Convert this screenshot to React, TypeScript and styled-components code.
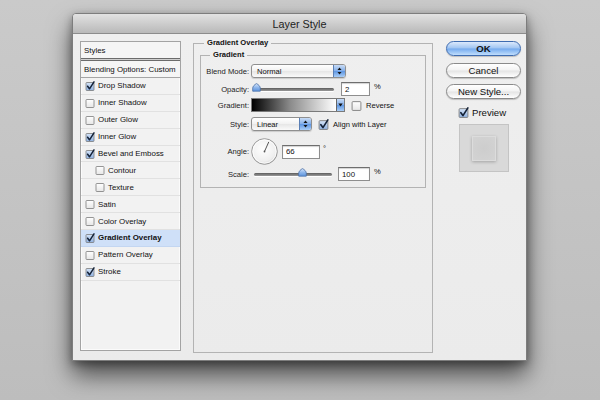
import React from "react";
import styled, { createGlobalStyle } from "styled-components";

const Global = createGlobalStyle`
  html, body { margin: 0; padding: 0; }
  body {
    width: 600px; height: 400px; overflow: hidden;
    background: linear-gradient(#cacaca, #bdbdbd);
    font-family: "Liberation Sans", Arial, sans-serif;
  }
`;

const Page = styled.div`
  width: 600px; height: 400px;
  padding: 13px 0 0 72px;
  box-sizing: border-box;
`;

const Window = styled.div`
  width: 455px; height: 348px;
  box-sizing: border-box;
  background: #ececec;
  border: 1px solid #7d7d7d;
  border-radius: 4px 4px 0 0;
  box-shadow: 0 14px 24px rgba(0,0,0,0.6), 0 3px 8px rgba(0,0,0,0.35);
  display: flex; flex-direction: column;
  overflow: hidden;
`;

const TitleBar = styled.div`
  height: 19px;
  flex: none;
  background: linear-gradient(#e2e2e2, #cdcdcd 50%, #b9b9b9);
  border-bottom: 1px solid #8c8c8c;
  display: flex; align-items: center; justify-content: center;
  font-size: 10.8px; color: #1d1d1d;
`;

const Body = styled.div`
  flex: 1;
  display: flex;
  padding: 0 5px 0 7px;
  background: linear-gradient(#efefef, #ebebeb);
`;

const LeftPanel = styled.div`
  margin-top: 7px;
  width: 101px; height: 310px;
  box-sizing: border-box;
  border: 1px solid #a3a3a3;
  box-shadow: inset 0 0 0 1px #fbfbfb;
  background: #f2f2f2;
  display: flex; flex-direction: column;
  font-size: 7.9px; color: #111;
`;

const HeadRow = styled.div<{ $ruled?: boolean }>`
  height: 16px;
  flex: none;
  display: flex; align-items: center;
  padding-left: 3px;
  background: #f5f5f5;
  border-bottom: ${(p) => (p.$ruled ? "1px solid #a5a5a5" : "none")};
`;

const DoubleRule = styled.div`
  height: 1px;
  flex: none;
  border-top: 1px solid #6c6c6c;
  border-bottom: 1px solid #6c6c6c;
  background: #cfcfcf;
`;

const ItemRow = styled.div<{ $indent?: boolean; $selected?: boolean }>`
  height: 16.9px;
  flex: none;
  box-sizing: border-box;
  display: flex; align-items: center; gap: 3px;
  padding-left: ${(p) => (p.$indent ? 14 : 4)}px;
  border-bottom: 1px solid ${(p) => (p.$selected ? "#c3d6f1" : "#e1e1e1")};
  background: ${(p) => (p.$selected ? "#cfe0f8" : "transparent")};
  font-weight: ${(p) => (p.$selected ? "bold" : "normal")};
`;

const Middle = styled.fieldset`
  margin: 3px 0 0 12px;
  width: 240px; height: 316px;
  box-sizing: border-box;
  border: 1px solid #b3b3b3;
  padding: 0 6px;
  min-width: 0;
`;

const Legend = styled.legend<{ $ml: number }>`
  margin-left: ${(p) => p.$ml}px;
  padding: 0 3px;
  font-size: 7.6px; font-weight: bold; color: #111;
  line-height: 12px;
`;

const Inner = styled.fieldset`
  margin: 0;
  border: 1px solid #b3b3b3;
  padding: 0 6px 6px 6px;
  min-width: 0;
  display: flex; flex-direction: column;
`;

const Row = styled.div<{ $mt: number; $h: number }>`
  margin-top: ${(p) => p.$mt}px;
  height: ${(p) => p.$h}px;
  display: grid;
  grid-template-columns: 42px auto;
  column-gap: 2px;
  align-items: center;
`;

const Label = styled.span`
  justify-self: end;
  white-space: nowrap;
  font-size: 7.6px; color: #222;
`;

const Controls = styled.div`
  display: flex; align-items: center;
  font-size: 7.6px; color: #111;
`;

const Select = styled.div<{ $w: number }>`
  width: ${(p) => p.$w}px; height: 14px;
  box-sizing: border-box;
  border: 1px solid #8f8f8f;
  border-radius: 3px;
  background: linear-gradient(#ffffff, #f1f1f1 50%, #e6e6e6 51%, #fafafa);
  display: flex; align-items: center;
  padding-left: 5px;
  overflow: hidden;
  box-shadow: 0 1px 1px rgba(0,0,0,0.15);
`;

const SelectText = styled.span`
  flex: 1;
`;

const Stepper = styled.div`
  width: 11px; height: 100%;
  border-left: 1px solid #5a7fb5;
  background: linear-gradient(#c9dcf6, #82aee9 50%, #5d95e2 51%, #a9cdf6);
  display: flex; align-items: center; justify-content: center;
`;

const Track = styled.div<{ $w: number; $ml: number }>`
  position: relative;
  margin-left: ${(p) => p.$ml}px;
  width: ${(p) => p.$w}px; height: 3px;
  border-radius: 2px;
  background: linear-gradient(#5c5c5c, #9a9a9a);
  box-shadow: 0 1px 0 #fff;
`;

const Thumb = styled.div`
  position: absolute;
  top: -5px;
  width: 9px; height: 9px;
  margin-left: -4px;
`;

const Input = styled.div<{ $w: number; $ml: number }>`
  margin-left: ${(p) => p.$ml}px;
  width: ${(p) => p.$w}px; height: 14px;
  box-sizing: border-box;
  background: #fff;
  border: 1px solid #8e8e8e;
  border-top-color: #6e6e6e;
  box-shadow: inset 0 1px 1px rgba(0,0,0,0.18);
  display: flex; align-items: center;
  padding-left: 3px;
  font-size: 7.8px;
`;

const Unit = styled.span<{ $ml: number }>`
  margin-left: ${(p) => p.$ml}px;
  position: relative;
  top: -3px;
  font-size: 7.6px;
`;

const GradientPicker = styled.div`
  width: 94px; height: 14px;
  box-sizing: border-box;
  border: 1px solid #7a7a7a;
  display: flex;
`;

const GradientFill = styled.div`
  flex: 1;
  background: linear-gradient(to right, #000, #8a8a8a 45%, #fff);
  border-right: 1px solid #666;
`;

const GradientArrow = styled.div`
  width: 7px;
  background: linear-gradient(#c9dcf6, #82aee9 50%, #5d95e2 51%, #a9cdf6);
  display: flex; align-items: center; justify-content: center;
`;

const CheckLabel = styled.label<{ $ml: number }>`
  margin-left: ${(p) => p.$ml}px;
  display: flex; align-items: center; gap: 4px;
  font-size: 7.6px; color: #111;
`;

const Dial = styled.div`
  width: 27px; height: 27px;
`;

const Right = styled.div`
  margin: 7px 0 0 13px;
  width: 75px;
  display: flex; flex-direction: column; align-items: center;
`;

const Button = styled.div<{ $primary?: boolean; $mt: number }>`
  margin-top: ${(p) => p.$mt}px;
  width: 75px; height: 15px;
  box-sizing: border-box;
  border-radius: 8px;
  border: 1px solid ${(p) => (p.$primary ? "#3f6cb0" : "#8a8a8a")};
  background: ${(p) =>
    p.$primary
      ? "linear-gradient(#dbe9fc, #9fc4f2 48%, #74aaee 52%, #c0defd)"
      : "linear-gradient(#ffffff, #f3f3f3 48%, #e4e4e4 52%, #ffffff)"};
  box-shadow: 0 1px 1px rgba(0,0,0,0.2);
  display: flex; align-items: center; justify-content: center;
  font-size: 9.6px; color: #111;
  font-weight: ${(p) => (p.$primary ? "bold" : "normal")};
`;

const PreviewRow = styled.label`
  margin-top: 8px;
  align-self: flex-start;
  margin-left: 12px;
  display: flex; align-items: center; gap: 3px;
  font-size: 9.6px; color: #111;
`;

const Swatch = styled.div`
  margin-top: 6px;
  width: 50px; height: 48px;
  box-sizing: border-box;
  background: #d9d9d9;
  border: 1px solid #c4c4c4;
  display: flex; align-items: center; justify-content: center;
`;

const SwatchSquare = styled.div`
  width: 22px; height: 23px;
  background: radial-gradient(circle, #cdcdcd, #d3d3d3);
  border: 1px solid #dcdcdc;
  box-shadow: 0 1px 3px rgba(0,0,0,0.25);
`;

function Check({ checked, size = 9 }: { checked: boolean; size?: number }) {
  const id = checked ? "cbOn" : "cbOff";
  return (
    <svg width={size + 1} height={size + 1} viewBox="0 0 10 10" style={{ flex: "none", overflow: "visible" }}>
      <defs>
        <linearGradient id={id} x1="0" y1="0" x2="0" y2="1">
          <stop offset="0" stopColor={checked ? "#d5e4f8" : "#ffffff"} />
          <stop offset="1" stopColor={checked ? "#8fb1e0" : "#e6e6e6"} />
        </linearGradient>
      </defs>
      <rect x="1" y="1.5" width="8" height="8" rx="0.8" fill={`url(#${id})`} stroke="#7b7b7b" strokeWidth="0.8" />
      {checked && (
        <path d="M2.6 5.2 L4.5 7.8 L9 0.8" fill="none" stroke="#142238" strokeWidth="1.5" strokeLinecap="round" strokeLinejoin="round" />
      )}
    </svg>
  );
}

function Arrows() {
  return (
    <svg width="5" height="8" viewBox="0 0 5 8">
      <path d="M2.5 0.5 L4.5 3 L0.5 3 Z" fill="#111" />
      <path d="M2.5 7.5 L4.5 5 L0.5 5 Z" fill="#111" />
    </svg>
  );
}

function DownArrow() {
  return (
    <svg width="5" height="4" viewBox="0 0 5 4">
      <path d="M0.3 0.5 L4.7 0.5 L2.5 3.6 Z" fill="#111" />
    </svg>
  );
}

function ThumbIcon() {
  return (
    <svg width="9" height="9" viewBox="0 0 9 9">
      <defs>
        <linearGradient id="th" x1="0" y1="0" x2="0" y2="1">
          <stop offset="0" stopColor="#d8e7fb" />
          <stop offset="0.5" stopColor="#8fb7ec" />
          <stop offset="1" stopColor="#5c93dd" />
        </linearGradient>
      </defs>
      <path d="M4.5 0.6 C6.5 1.6 8.3 3.4 8.3 5.2 L8.3 8.2 L0.7 8.2 L0.7 5.2 C0.7 3.4 2.5 1.6 4.5 0.6 Z" fill="url(#th)" stroke="#4a6fa5" strokeWidth="0.8" />
    </svg>
  );
}

function DialIcon({ angle }: { angle: number }) {
  const r = 10.5;
  const rad = (angle * Math.PI) / 180;
  const x = 13.5 + r * Math.cos(rad);
  const y = 13.5 - r * Math.sin(rad);
  return (
    <svg width="27" height="27" viewBox="0 0 27 27">
      <defs>
        <radialGradient id="dg" cx="0.45" cy="0.4" r="0.6">
          <stop offset="0" stopColor="#ffffff" />
          <stop offset="0.8" stopColor="#efefef" />
          <stop offset="1" stopColor="#d6d6d6" />
        </radialGradient>
      </defs>
      <circle cx="13.5" cy="13.5" r="12.8" fill="url(#dg)" stroke="#8f8f8f" strokeWidth="0.9" />
      <circle cx="13.5" cy="13.5" r="11.6" fill="none" stroke="#fff" strokeWidth="0.8" />
      <line x1="13.5" y1="13.5" x2={x} y2={y} stroke="#444" strokeWidth="0.9" />
      <circle cx="13.5" cy="13.5" r="0.9" fill="#555" />
    </svg>
  );
}

const items: { name: string; checked: boolean; indent?: boolean; selected?: boolean }[] = [
  { name: "Drop Shadow", checked: true },
  { name: "Inner Shadow", checked: false },
  { name: "Outer Glow", checked: false },
  { name: "Inner Glow", checked: true },
  { name: "Bevel and Emboss", checked: true },
  { name: "Contour", checked: false, indent: true },
  { name: "Texture", checked: false, indent: true },
  { name: "Satin", checked: false },
  { name: "Color Overlay", checked: false },
  { name: "Gradient Overlay", checked: true, selected: true },
  { name: "Pattern Overlay", checked: false },
  { name: "Stroke", checked: true },
];

export default function App() {
  return (
    <>
      <Global />
      <Page>
        <Window>
          <TitleBar>Layer Style</TitleBar>
          <Body>
            <LeftPanel>
              <HeadRow>Styles</HeadRow>
              <DoubleRule />
              <HeadRow $ruled>Blending Options: Custom</HeadRow>
              {items.map((it) => (
                <ItemRow key={it.name} $indent={it.indent} $selected={it.selected}>
                  <Check checked={it.checked} />
                  <span>{it.name}</span>
                </ItemRow>
              ))}
            </LeftPanel>

            <Middle>
              <Legend $ml={4}>Gradient Overlay</Legend>
              <Inner>
                <Legend $ml={3}>Gradient</Legend>
                <Row $mt={3} $h={14}>
                  <Label>Blend Mode:</Label>
                  <Controls>
                    <Select $w={95}>
                      <SelectText>Normal</SelectText>
                      <Stepper><Arrows /></Stepper>
                    </Select>
                  </Controls>
                </Row>
                <Row $mt={4} $h={14}>
                  <Label>Opacity:</Label>
                  <Controls>
                    <Track $w={80} $ml={3}>
                      <Thumb style={{ left: 2 }}><ThumbIcon /></Thumb>
                    </Track>
                    <Input $w={29} $ml={7}>2</Input>
                    <Unit $ml={4}>%</Unit>
                  </Controls>
                </Row>
                <Row $mt={2} $h={14}>
                  <Label>Gradient:</Label>
                  <Controls>
                    <GradientPicker>
                      <GradientFill />
                      <GradientArrow><DownArrow /></GradientArrow>
                    </GradientPicker>
                    <CheckLabel $ml={6}>
                      <Check checked={false} size={10} />
                      Reverse
                    </CheckLabel>
                  </Controls>
                </Row>
                <Row $mt={5} $h={14}>
                  <Label>Style:</Label>
                  <Controls>
                    <Select $w={61}>
                      <SelectText>Linear</SelectText>
                      <Stepper><Arrows /></Stepper>
                    </Select>
                    <CheckLabel $ml={6}>
                      <Check checked size={10} />
                      Align with Layer
                    </CheckLabel>
                  </Controls>
                </Row>
                <Row $mt={7} $h={27}>
                  <Label>Angle:</Label>
                  <Controls>
                    <Dial><DialIcon angle={66} /></Dial>
                    <Input $w={38} $ml={4}>66</Input>
                    <Unit $ml={3}>°</Unit>
                  </Controls>
                </Row>
                <Row $mt={2} $h={14}>
                  <Label>Scale:</Label>
                  <Controls>
                    <Track $w={78} $ml={3}>
                      <Thumb style={{ left: 48 }}><ThumbIcon /></Thumb>
                    </Track>
                    <Input $w={32} $ml={6}>100</Input>
                    <Unit $ml={4}>%</Unit>
                  </Controls>
                </Row>
              </Inner>
            </Middle>

            <Right>
              <Button $primary $mt={0}>OK</Button>
              <Button $mt={7}>Cancel</Button>
              <Button $mt={6}>New Style...</Button>
              <PreviewRow>
                <Check checked size={10} />
                Preview
              </PreviewRow>
              <Swatch><SwatchSquare /></Swatch>
            </Right>
          </Body>
        </Window>
      </Page>
    </>
  );
}
